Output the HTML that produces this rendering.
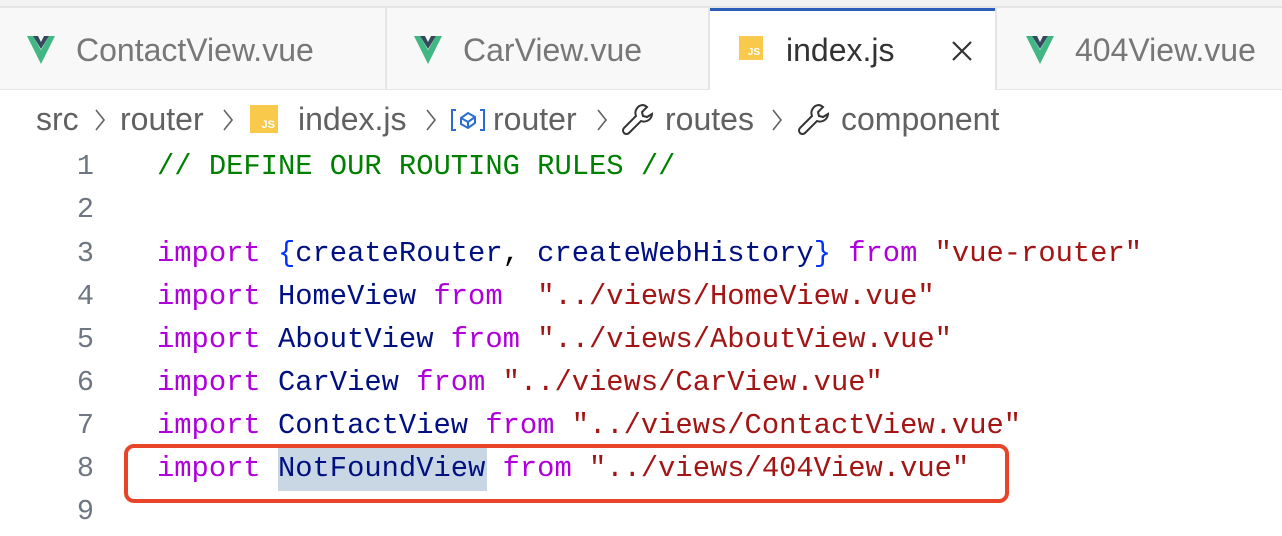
<!DOCTYPE html>
<html><head><meta charset="utf-8"><style>
body{margin:0;width:1282px;height:536px;background:#fff;overflow:hidden;position:relative;font-family:"Liberation Sans",sans-serif}
.tabbar{position:absolute;left:0;top:0;width:1282px;height:90px;background:#f3f3f3;border-bottom:2px solid #e5e5e5;box-sizing:border-box}
.topline{position:absolute;left:0;top:6px;width:1282px;height:2px;background:#e5e5e5}
.tab{position:absolute;top:8px;height:81px;font-size:32px;color:#777;line-height:84px;background:#f8f8f8;white-space:nowrap}
.sep{position:absolute;top:8px;width:2px;height:82px;background:#e5e5e5}
.vue{position:absolute;top:36px}
.ci{position:absolute;top:98px;font-size:32px;color:#616161;line-height:42px;white-space:nowrap}
.js{position:absolute;width:24px;height:24px;background:#f8c94b;color:#fff;font-size:10px;font-weight:bold;text-align:right;line-height:34px;box-sizing:border-box;padding-right:3px;overflow:hidden}
.ch{position:absolute;top:108px}
.ln{position:absolute;left:40px;width:54px;text-align:right;font-family:"Liberation Mono",monospace;font-size:28.5px;color:#6e7681}
.code{position:absolute;left:157px;font-family:"Liberation Mono",monospace;font-size:28.8px;white-space:pre;color:#001080}
.k{color:#af00db}.s{color:#a31515}.c{color:#008000}.b{color:#0431fa}.o{color:#000}
</style></head><body>
<div class="tabbar"></div><div class="topline"></div>
<div class="tab" style="left:0;width:385px"></div>
<div class="tab" style="left:387px;width:321px"></div>
<div class="tab" style="left:710px;width:285px;background:#fff;height:83px;border-top:3px solid #2a5cb8;box-sizing:border-box"></div>
<div class="tab" style="left:997px;width:285px"></div>
<div class="sep" style="left:385px"></div><div class="sep" style="left:708px"></div><div class="sep" style="left:995px"></div>
<svg class="vue" style="left:27px" width="28" height="28" viewBox="0 0 28 28"><path d="M0 0h6l8 14 8-14h6L14 28z" fill="#41b883"/><path d="M6 0h5l3 6 3-6h5l-8 13z" fill="#35495e"/></svg>
<div class="tab" style="left:76px;background:none">ContactView.vue</div>
<svg class="vue" style="left:414px" width="28" height="28" viewBox="0 0 28 28"><path d="M0 0h6l8 14 8-14h6L14 28z" fill="#41b883"/><path d="M6 0h5l3 6 3-6h5l-8 13z" fill="#35495e"/></svg>
<div class="tab" style="left:463px;background:none">CarView.vue</div>
<div class="js" style="left:739px;top:36px">JS</div>
<div class="tab" style="left:786px;background:none;color:#333">index.js</div>
<svg style="position:absolute;left:951px;top:40px" width="22" height="22" viewBox="0 0 22 22"><path d="M2 2L20 20M20 2L2 20" stroke="#333" stroke-width="2.2"/></svg>
<svg class="vue" style="left:1026px" width="28" height="28" viewBox="0 0 28 28"><path d="M0 0h6l8 14 8-14h6L14 28z" fill="#41b883"/><path d="M6 0h5l3 6 3-6h5l-8 13z" fill="#35495e"/></svg>
<div class="tab" style="left:1075px;background:none">404View.vue</div>

<div class="ci" style="left:36px">src</div>
<svg class="ch" style="left:94px" width="12" height="24" viewBox="0 0 12 24"><path d="M2 2L10 12L2 22" fill="none" stroke="#616161" stroke-width="1.6"/></svg>
<div class="ci" style="left:120px">router</div>
<svg class="ch" style="left:222px" width="12" height="24" viewBox="0 0 12 24"><path d="M2 2L10 12L2 22" fill="none" stroke="#616161" stroke-width="1.6"/></svg>
<div class="js" style="left:250px;top:105px;width:28px;height:28px;line-height:40px;font-size:11px">JS</div>
<div class="ci" style="left:298px">index.js</div>
<svg class="ch" style="left:425px" width="12" height="24" viewBox="0 0 12 24"><path d="M2 2L10 12L2 22" fill="none" stroke="#616161" stroke-width="1.6"/></svg>
<svg style="position:absolute;left:450px;top:108px" width="36" height="24" viewBox="0 0 36 24"><path d="M6 2H2V22H6M30 2H34V22H30" fill="none" stroke="#2a6fd0" stroke-width="2"/><path d="M11 10L18 5L25 9V15L18 20L11 16Z M11 10L18 14L25 9M18 14V20" fill="none" stroke="#2a6fd0" stroke-width="2"/></svg>
<div class="ci" style="left:493px">router</div>
<svg class="ch" style="left:596px" width="12" height="24" viewBox="0 0 12 24"><path d="M2 2L10 12L2 22" fill="none" stroke="#616161" stroke-width="1.6"/></svg>
<svg style="position:absolute;left:621px;top:102px" width="34" height="34" viewBox="0 0 34 34"><path d="M22 3a8 8 0 0 0-7 11L3 26a3 3 0 0 0 5 5l12-12a8 8 0 0 0 11-7l-5 3-4-1-1-4 5-5a8 8 0 0 0-4-2z" fill="none" stroke="#333" stroke-width="2"/></svg>
<div class="ci" style="left:665px">routes</div>
<svg class="ch" style="left:771px" width="12" height="24" viewBox="0 0 12 24"><path d="M2 2L10 12L2 22" fill="none" stroke="#616161" stroke-width="1.6"/></svg>
<svg style="position:absolute;left:797px;top:102px" width="34" height="34" viewBox="0 0 34 34"><path d="M22 3a8 8 0 0 0-7 11L3 26a3 3 0 0 0 5 5l12-12a8 8 0 0 0 11-7l-5 3-4-1-1-4 5-5a8 8 0 0 0-4-2z" fill="none" stroke="#333" stroke-width="2"/></svg>
<div class="ci" style="left:841px">component</div>

<div style="position:absolute;left:278px;top:448px;width:209px;height:43px;background:#c9d6e4"></div>
<div style="position:absolute;left:124px;top:444px;width:885px;height:59px;border:4px solid #e8442a;border-radius:10px;box-sizing:border-box"></div>

<div class="ln" style="top:150px">1</div><div class="code c" style="top:150px">// DEFINE OUR ROUTING RULES //</div>
<div class="ln" style="top:193px">2</div>
<div class="ln" style="top:237px">3</div><div class="code" style="top:237px"><span class="k">import</span> <span class="b">{</span>createRouter<span class="o">,</span> createWebHistory<span class="b">}</span> <span class="k">from</span> <span class="s">"vue-router"</span></div>
<div class="ln" style="top:280px">4</div><div class="code" style="top:280px"><span class="k">import</span> HomeView <span class="k">from</span>  <span class="s">"../views/HomeView.vue"</span></div>
<div class="ln" style="top:323px">5</div><div class="code" style="top:323px"><span class="k">import</span> AboutView <span class="k">from</span> <span class="s">"../views/AboutView.vue"</span></div>
<div class="ln" style="top:366px">6</div><div class="code" style="top:366px"><span class="k">import</span> CarView <span class="k">from</span> <span class="s">"../views/CarView.vue"</span></div>
<div class="ln" style="top:409px">7</div><div class="code" style="top:409px"><span class="k">import</span> ContactView <span class="k">from</span> <span class="s">"../views/ContactView.vue"</span></div>
<div class="ln" style="top:452px">8</div><div class="code" style="top:452px"><span class="k">import</span> NotFoundView <span class="k">from</span> <span class="s">"../views/404View.vue"</span></div>
<div class="ln" style="top:495px">9</div>
</body></html>
